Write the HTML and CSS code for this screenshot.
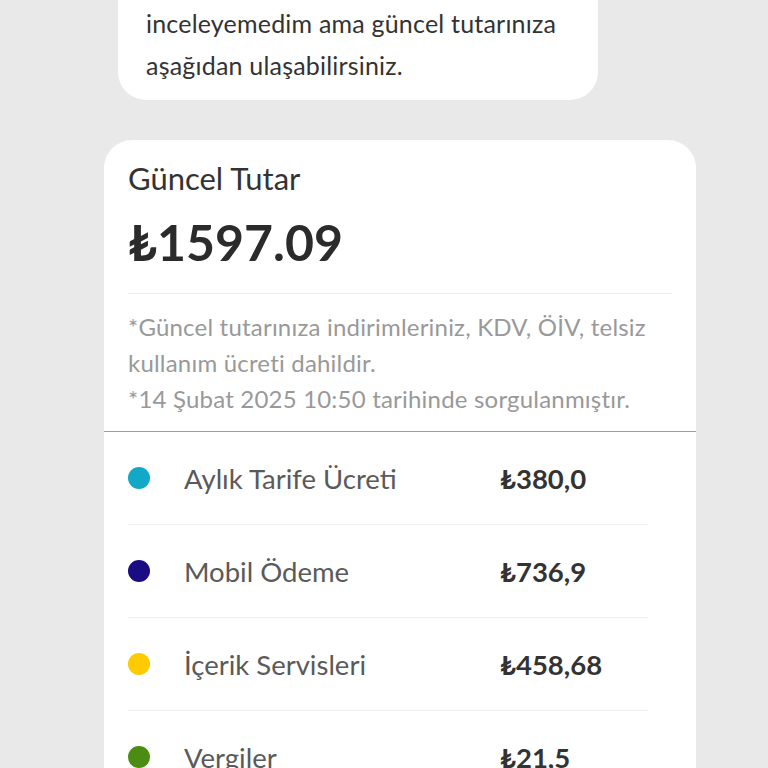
FILE: index.html
```html
<!DOCTYPE html>
<html lang="tr">
<head>
    <meta charset="UTF-8">
    <meta name="viewport" content="width=device-width, initial-scale=1.0">
    <title>Güncel Tutar</title>
    <link rel="stylesheet" href="styles.css">
</head>
<body>

    <div class="chat">
        <div class="bubble">
            <p>inceleyemedim ama güncel tutarınıza aşağıdan ulaşabilirsiniz.</p>
        </div>

        <div class="card">
            <div class="card-head">
                <h2 class="title">Güncel Tutar</h2>
                <div class="total">₺1597.09</div>
                <div class="notes">
                    <p>*Güncel tutarınıza indirimleriniz, KDV, ÖİV, telsiz kullanım ücreti dahildir.</p>
                    <p>*14 Şubat 2025 10:50 tarihinde sorgulanmıştır.</p>
                </div>
            </div>

            <ul class="items">
                <li class="item">
                    <span class="dot dot-tariff"></span>
                    <span class="label">Aylık Tarife Ücreti</span>
                    <span class="amount">₺380,0</span>
                </li>
                <li class="item">
                    <span class="dot dot-mobile"></span>
                    <span class="label">Mobil Ödeme</span>
                    <span class="amount">₺736,9</span>
                </li>
                <li class="item">
                    <span class="dot dot-content"></span>
                    <span class="label">İçerik Servisleri</span>
                    <span class="amount">₺458,68</span>
                </li>
                <li class="item">
                    <span class="dot dot-tax"></span>
                    <span class="label">Vergiler</span>
                    <span class="amount">₺21,5</span>
                </li>
            </ul>
        </div>
    </div>

</body>
</html>
```

FILE: styles.css
```css
body {
    font-family: 'Lato', 'Noto Sans', sans-serif;
    margin: 0;
    padding: 0;
    background-color: #e9e9e9;
    color: #333;
    overflow: hidden;
}

p {
    margin: 0;
}

.chat {
    display: flex;
    flex-direction: column;
    align-items: flex-start;
}

/* message bubble, scrolled so its top is out of view */
.bubble {
    width: 480px;
    box-sizing: border-box;
    margin: -32px 0 0 118px;
    padding: 34px 28px 14px;
    background-color: #fff;
    border-radius: 28px;
    font-size: 25px;
    letter-spacing: 0.2px;
    line-height: 42px;
    color: #333;
}

.card {
    width: 592px;
    margin: 40px 0 0 104px;
    background-color: #fff;
    border-radius: 28px 28px 0 0;
}

.card-head {
    padding: 20px 24px 14px;
    border-bottom: 1px solid #9e9e9e;
}

.title {
    margin: 0;
    font-size: 31px;
    font-weight: normal;
    line-height: 36px;
    color: #333;
}

.total {
    margin-top: 16px;
    padding-bottom: 21px;
    font-size: 50px;
    font-weight: bold;
    line-height: 60px;
    color: #2b2b2b;
    border-bottom: 1px solid #eee;
}

.notes {
    margin-top: 15px;
    font-size: 24px;
    letter-spacing: 0.2px;
    line-height: 36px;
    color: #999;
}

.items {
    list-style: none;
    margin: 0;
    padding: 0 48px 0 24px;
}

.item {
    display: grid;
    grid-template-columns: 56px 316px 1fr;
    align-items: center;
    height: 92px;
    border-bottom: 1px solid #eee;
}

.dot {
    width: 22px;
    height: 22px;
    border-radius: 50%;
}

.dot-tariff {
    background-color: #12a8c7;
}

.dot-mobile {
    background-color: #1a0d84;
}

.dot-content {
    background-color: #fecb00;
}

.dot-tax {
    background-color: #4b8c13;
}

.label {
    font-size: 27.5px;
    color: #5a5a5a;
}

.amount {
    font-size: 27.5px;
    font-weight: bold;
    color: #333;
}
```
